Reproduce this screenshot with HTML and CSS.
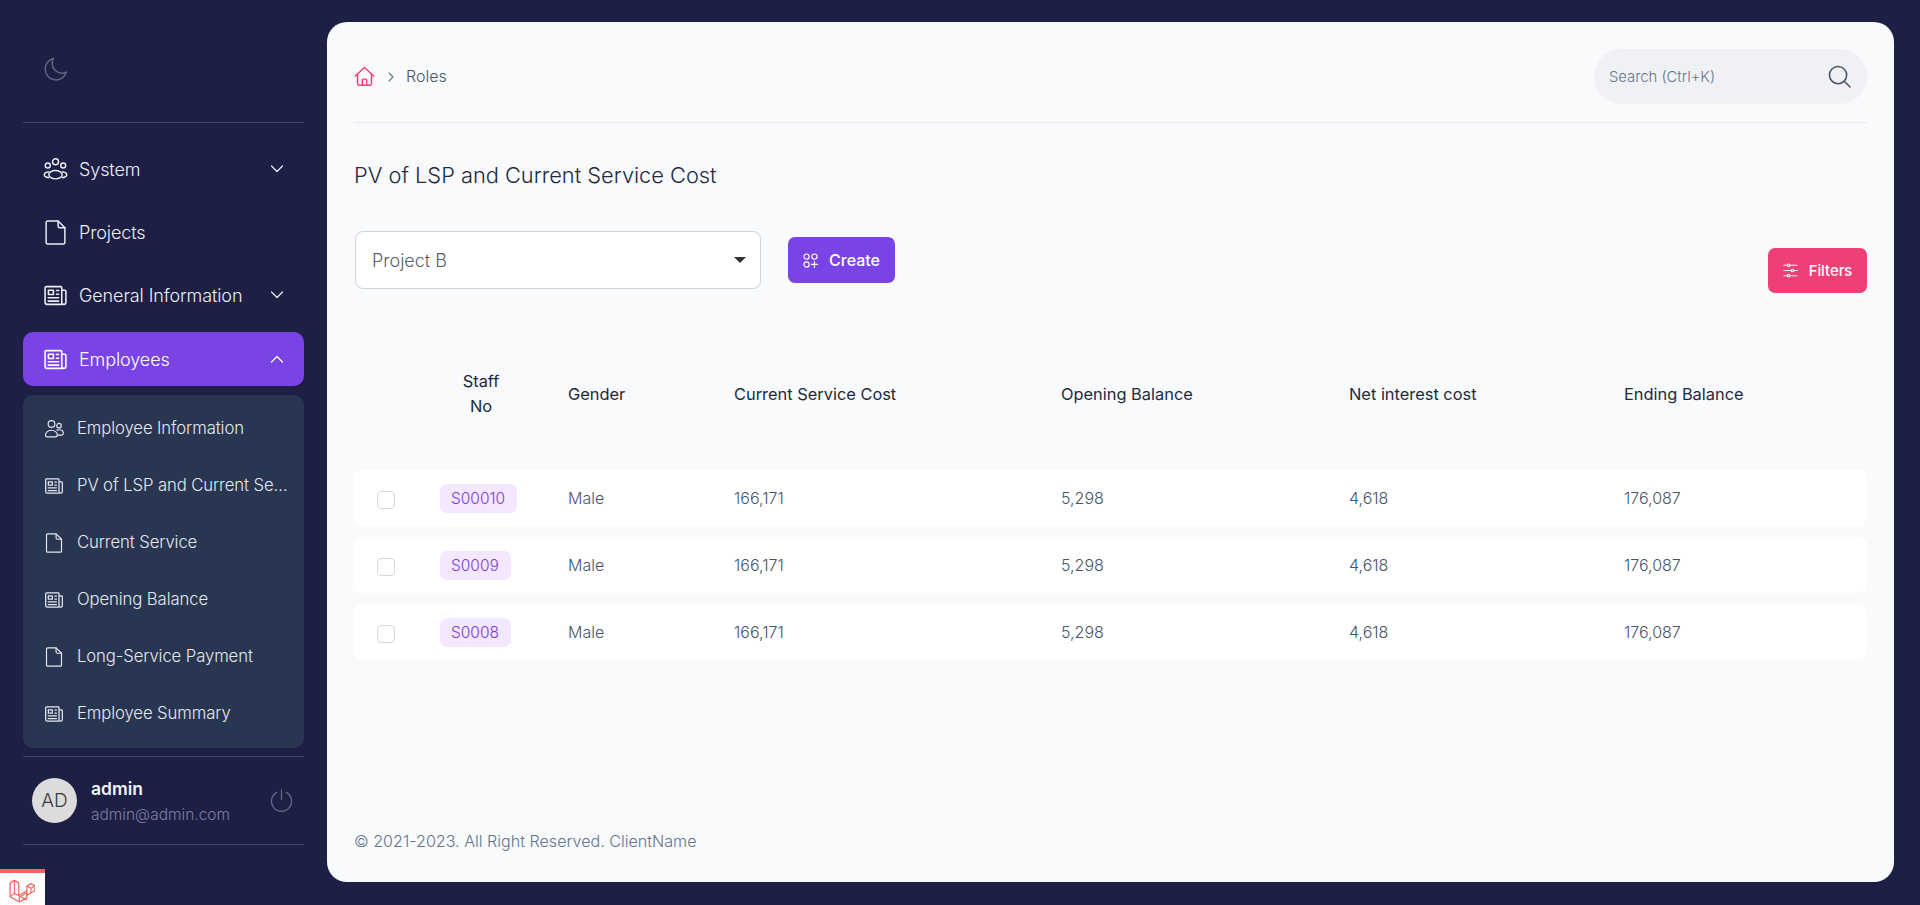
FILE: index.html
```html
<!DOCTYPE html>
<html lang="en">
<head>
    <meta charset="UTF-8">
    <meta name="viewport" content="width=device-width, initial-scale=1.0">
    <title>PV of LSP and Current Service Cost</title>
    <link rel="stylesheet" href="styles.css">
</head>
<body>
    <svg class="icon-defs" width="0" height="0">
        <symbol id="i-news" viewBox="0 0 24 24" fill="none" stroke="currentColor" stroke-width="1.5" stroke-linecap="round" stroke-linejoin="round">
            <path d="M18 20.5H4a2 2 0 0 1-2-2v-14a1 1 0 0 1 1-1h14a1 1 0 0 1 1 1v14a2 2 0 0 0 2 2 2 2 0 0 0 2-2V8a1 1 0 0 0-1-1h-3"/>
            <rect x="5.2" y="7" width="4.8" height="4"/>
            <path d="M13 7.2h2M13 10.8h2M5 14.2h10M5 17.4h10"/>
        </symbol>
        <symbol id="i-doc" viewBox="0 0 24 24" fill="none" stroke="currentColor" stroke-width="1.4" stroke-linecap="round" stroke-linejoin="round">
            <path d="M14.500 1H4.500A1.500 1.500 0 0 0 3 2.500v19A1.500 1.500 0 0 0 4.500 23h15a1.500 1.500 0 0 0 1.500-1.500V7.500z"/>
            <path d="M14.500 1v5a1.500 1.500 0 0 0 1.500 1.500h5"/>
        </symbol>
        <symbol id="i-team" viewBox="0 0 24 24" fill="none" stroke="currentColor" stroke-width="1.4">
            <circle cx="12" cy="4.600" r="2.900"/>
            <circle cx="4.600" cy="8.200" r="2.400"/>
            <circle cx="19.400" cy="8.200" r="2.400"/>
            <ellipse cx="12" cy="17" rx="6.400" ry="4"/>
            <path d="M6 14.200c-2.600.3-4.800 1.400-4.800 2.900s2 2.500 4.600 2.800M18 14.200c2.600.3 4.800 1.400 4.800 2.900s-2 2.500-4.600 2.800"/>
        </symbol>
        <symbol id="i-people" viewBox="0 0 24 24" fill="none" stroke="currentColor" stroke-width="1.4" stroke-linecap="round">
            <circle cx="9" cy="6" r="4"/>
            <circle cx="18" cy="8" r="2.700"/>
            <path d="M3.600 21.500h9.800c1.600 0 2.600-1 2.600-2.300 0-3.200-3.200-5.700-7-5.700s-7.200 2.500-7.200 5.700c0 1.300.9 2.300 1.800 2.300z"/>
            <path d="M15.500 13.300c.8-.3 1.600-.4 2.500-.4 3 0 5.200 1.800 5.200 4.200 0 1.400-.9 2.200-2.200 2.200h-4.800"/>
        </symbol>
        <symbol id="i-down" viewBox="0 0 14 14" fill="none" stroke="currentColor" stroke-width="1.200" stroke-linecap="round" stroke-linejoin="round">
            <path d="M1.500 4l5.500 5.500L12.500 4"/>
        </symbol>
        <symbol id="i-up" viewBox="0 0 14 14" fill="none" stroke="currentColor" stroke-width="1.200" stroke-linecap="round" stroke-linejoin="round">
            <path d="M1.500 10L7 4.500 12.500 10"/>
        </symbol>
    </svg>

    <div class="app">
        <aside class="sidebar">
            <div class="sidebar-top">
                <svg class="moon" viewBox="0 0 24 24" fill="none" stroke="currentColor" stroke-width="1.500" stroke-linejoin="round">
                    <path d="M9.500 1.500A10.700 10.700 0 0 0 1.200 12a10.800 10.800 0 0 0 21.200 3c-1.200.8-2.800 1.200-4.400 1.200A9.800 9.800 0 0 1 8.200 6.400c0-1.800.5-3.500 1.300-4.900z"/>
                </svg>
            </div>

            <nav class="nav">
                <a class="nav-item">
                    <svg class="nav-icon"><use href="#i-team"/></svg>
                    <span class="nav-label">System</span>
                    <svg class="nav-caret"><use href="#i-down"/></svg>
                </a>
                <a class="nav-item">
                    <svg class="nav-icon"><use href="#i-doc"/></svg>
                    <span class="nav-label">Projects</span>
                </a>
                <a class="nav-item">
                    <svg class="nav-icon"><use href="#i-news"/></svg>
                    <span class="nav-label">General Information</span>
                    <svg class="nav-caret"><use href="#i-down"/></svg>
                </a>
                <a class="nav-item active">
                    <svg class="nav-icon"><use href="#i-news"/></svg>
                    <span class="nav-label">Employees</span>
                    <svg class="nav-caret"><use href="#i-up"/></svg>
                </a>
                <div class="subnav">
                    <a class="sub-item"><svg class="sub-icon"><use href="#i-people"/></svg><span class="sub-label">Employee Information</span></a>
                    <a class="sub-item"><svg class="sub-icon"><use href="#i-news"/></svg><span class="sub-label">PV of LSP and Current Service Cost</span></a>
                    <a class="sub-item"><svg class="sub-icon"><use href="#i-doc"/></svg><span class="sub-label">Current Service</span></a>
                    <a class="sub-item"><svg class="sub-icon"><use href="#i-news"/></svg><span class="sub-label">Opening Balance</span></a>
                    <a class="sub-item"><svg class="sub-icon"><use href="#i-doc"/></svg><span class="sub-label">Long-Service Payment</span></a>
                    <a class="sub-item"><svg class="sub-icon"><use href="#i-news"/></svg><span class="sub-label">Employee Summary</span></a>
                </div>
            </nav>

            <div class="user-box">
                <div class="avatar">AD</div>
                <div class="user-info">
                    <div class="user-name">admin</div>
                    <div class="user-mail">admin@admin.com</div>
                </div>
                <svg class="power" viewBox="0 0 24 24" fill="none" stroke="currentColor" stroke-width="1.400" stroke-linecap="round">
                    <path d="M12 1v10"/>
                    <path d="M7 3.500a10.500 10.500 0 1 0 10 0"/>
                </svg>
            </div>
        </aside>

        <main class="card">
            <header class="topbar">
                <div class="breadcrumb">
                    <svg class="home" viewBox="0 0 24 24" fill="none" stroke="currentColor" stroke-width="1.700" stroke-linecap="round" stroke-linejoin="round">
                        <path d="M1.500 11.500L12 1.800l10.500 9.700"/>
                        <path d="M4 9.500V20a2 2 0 0 0 2 2h12a2 2 0 0 0 2-2V9.500"/>
                        <path d="M9.500 22v-6a1 1 0 0 1 1-1h3a1 1 0 0 1 1 1v6"/>
                    </svg>
                    <svg class="crumb-sep" viewBox="0 0 10 10" fill="none" stroke="currentColor" stroke-width="1.100" stroke-linecap="round" stroke-linejoin="round">
                        <path d="M3 1l4 4-4 4"/>
                    </svg>
                    <span class="crumb">Roles</span>
                </div>
                <div class="search">
                    <input class="search-input" type="text" placeholder="Search (Ctrl+K)">
                    <svg class="search-icon" viewBox="0 0 24 24" fill="none" stroke="currentColor" stroke-width="1.600" stroke-linecap="round">
                        <circle cx="10.500" cy="10.500" r="9"/>
                        <path d="M17 17l6 6"/>
                    </svg>
                </div>
            </header>

            <h1 class="page-title">PV of LSP and Current Service Cost</h1>

            <div class="toolbar">
                <div class="toolbar-left">
                    <div class="select-wrap">
                        <select class="select">
                            <option>Project B</option>
                            <option>Project A</option>
                        </select>
                    </div>
                    <button class="btn btn-create" type="button">
                        <svg class="btn-icon" viewBox="0 0 16 16" fill="none" stroke="currentColor" stroke-width="1.200" stroke-linecap="round">
                            <circle cx="3.800" cy="3.800" r="2.800"/>
                            <circle cx="12.200" cy="3.800" r="2.800"/>
                            <circle cx="3.800" cy="12.200" r="2.800"/>
                            <path d="M12.200 9v6.500M9 12.200h6.500"/>
                        </svg>
                        Create
                    </button>
                </div>
                <button class="btn btn-filters" type="button">
                    <svg class="btn-icon" viewBox="0 0 16 16" fill="none" stroke="currentColor" stroke-width="1.100" stroke-linecap="round">
                        <path d="M1 2.500h3.500M7.500 2.500H15M1 8h7.500M11.500 8H15M1 13.500h3.500M7.500 13.500H15"/>
                        <circle cx="6" cy="2.500" r="1.400"/>
                        <circle cx="10" cy="8" r="1.400"/>
                        <circle cx="6" cy="13.500" r="1.400"/>
                    </svg>
                    Filters
                </button>
            </div>

            <table class="data-table">
                <colgroup>
                    <col class="col-check">
                    <col class="col-staff">
                    <col class="col-gender">
                    <col class="col-current">
                    <col class="col-opening">
                    <col class="col-net">
                    <col class="col-ending">
                </colgroup>
                <thead>
                    <tr>
                        <th></th>
                        <th class="th-staff">Staff<br>No</th>
                        <th>Gender</th>
                        <th>Current Service Cost</th>
                        <th>Opening Balance</th>
                        <th>Net interest cost</th>
                        <th>Ending Balance</th>
                    </tr>
                </thead>
                <tbody>
                    <tr>
                        <td class="td-check"><input class="check" type="checkbox"></td>
                        <td><span class="badge">S00010</span></td>
                        <td>Male</td>
                        <td>166,171</td>
                        <td>5,298</td>
                        <td>4,618</td>
                        <td>176,087</td>
                    </tr>
                    <tr>
                        <td class="td-check"><input class="check" type="checkbox"></td>
                        <td><span class="badge">S0009</span></td>
                        <td>Male</td>
                        <td>166,171</td>
                        <td>5,298</td>
                        <td>4,618</td>
                        <td>176,087</td>
                    </tr>
                    <tr>
                        <td class="td-check"><input class="check" type="checkbox"></td>
                        <td><span class="badge">S0008</span></td>
                        <td>Male</td>
                        <td>166,171</td>
                        <td>5,298</td>
                        <td>4,618</td>
                        <td>176,087</td>
                    </tr>
                </tbody>
            </table>

            <footer class="page-footer">© 2021-2023. All Right Reserved. ClientName</footer>
        </main>
    </div>

    <div class="debugbar">
        <svg class="debugbar-logo" viewBox="0 0 24 24" fill="none" stroke="currentColor" stroke-width="1.100" stroke-linejoin="round">
            <path d="M1 4.500L5 2.200l4 2.300v11.600l7.500 4.300"/>
            <path d="M1 4.500v12.700l8.500 4.900 7-4v-4.600"/>
            <path d="M5 2.200v12l4 1.900M5 14.200l-4 3"/>
            <path d="M9.500 22.100v-4.400l7-4M9 16.100l7.500-4.300"/>
            <path d="M16.500 7.300l3.700-2.100 3.700 2.100v4.400l-7.400 4.300V11.600z"/>
            <path d="M16.500 7.300l3.700 2.100 3.700-2.100M20.200 9.400v4.400"/>
        </svg>
    </div>
</body>
</html>
```

FILE: styles.css
```css
* {
    box-sizing: border-box;
}
html, body {
    height: 100%;
}
body {
    margin: 0;
    background-color: #1e1f45;
    font-family: Inter, "Noto Sans", sans-serif;
    color: #334155;
    overflow: hidden;
}
.icon-defs {
    position: absolute;
}
.app {
    display: flex;
    height: 905px;
}

/* sidebar */
.sidebar {
    width: 327px;
    flex-shrink: 0;
    padding: 0 23px;
    display: flex;
    flex-direction: column;
}
.sidebar-top {
    height: 123px;
    padding: 57px 0 0 21px;
    border-bottom: 1px solid #3c4869;
}
.moon {
    display: block;
    width: 24px;
    height: 24px;
    color: #62657f;
}
.nav {
    padding-top: 19px;
}
.nav-item {
    height: 54px;
    margin-bottom: 9px;
    padding: 0 21px 0 20px;
    display: flex;
    align-items: center;
    border-radius: 10px;
    color: #eceef6;
}
.nav-item.active {
    margin-top: 10px;
    background-color: #7a43e6;
    color: #fff;
}
.nav-icon {
    width: 25px;
    height: 25px;
    flex-shrink: 0;
    margin-right: 11px;
}
.nav-label {
    flex: 1;
    font-size: 18px;
    font-weight: 300;
    letter-spacing: -0.1px;
}
.nav-caret {
    width: 14px;
    height: 14px;
    margin-right: -1px;
}
.subnav {
    height: 353px;
    padding: 5px 0;
    border-radius: 10px;
    background-color: #293651;
}
.sub-item {
    height: 57px;
    padding: 0 12px 0 21px;
    display: flex;
    align-items: center;
    color: #e4e7f0;
}
.sub-icon {
    width: 20px;
    height: 20px;
    flex-shrink: 0;
    margin-right: 13px;
}
.sub-label {
    padding-bottom: 2px;
    font-size: 16.700px;
    font-weight: 300;
    letter-spacing: -0.1px;
    white-space: nowrap;
    overflow: hidden;
    text-overflow: ellipsis;
}
.user-box {
    margin-top: 8px;
    height: 89px;
    padding: 0 11px 0 9px;
    display: flex;
    align-items: center;
    border-top: 1px solid #3c4869;
    border-bottom: 1px solid #3c4869;
}
.avatar {
    width: 45px;
    height: 45px;
    flex-shrink: 0;
    margin-right: 14px;
    border-radius: 50%;
    background-color: #dcdcdc;
    color: #3a3a3a;
    font-size: 19px;
    font-weight: 300;
    display: flex;
    align-items: center;
    justify-content: center;
}
.user-info {
    flex: 1;
}
.user-name {
    font-size: 17.500px;
    font-weight: 600;
    color: #f4f5fa;
    margin-bottom: 6px;
}
.user-mail {
    font-size: 15.500px;
    font-weight: 300;
    color: #7a80a0;
}
.power {
    width: 23px;
    height: 23px;
    color: #62657f;
}

/* main card */
.card {
    flex: 1;
    margin: 22px 26px 23px 0;
    padding: 0 27px 31px;
    display: flex;
    flex-direction: column;
    border-radius: 20px;
    background-color: #f9fafc;
}
.topbar {
    padding: 27px 0 18px;
    display: flex;
    align-items: center;
    justify-content: space-between;
    border-bottom: 1px solid #e6e8ec;
}
.breadcrumb {
    display: flex;
    align-items: center;
}
.home {
    width: 21px;
    height: 21px;
    color: #ee4077;
}
.crumb-sep {
    width: 10px;
    height: 10px;
    margin: 0 10px 0 11px;
    color: #64748b;
}
.crumb {
    margin-bottom: 2px;
    font-size: 16px;
    font-weight: 300;
    color: #475569;
}
.search {
    width: 273px;
    height: 55px;
    padding: 0 16px 0 15px;
    display: flex;
    align-items: center;
    border-radius: 28px;
    background-color: #f0f1f5;
}
.search-input {
    flex: 1;
    min-width: 0;
    border: none;
    background: none;
    outline: none;
    padding: 0;
    font-family: inherit;
    font-size: 14.800px;
    font-weight: 300;
}
.search-input::placeholder {
    color: #64748b;
    opacity: 1;
}
.search-icon {
    width: 23px;
    height: 23px;
    color: #475569;
}
.page-title {
    margin: 37px 0 41px;
    font-size: 21.800px;
    line-height: 30px;
    font-weight: 300;
    color: #1e293b;
}
.toolbar {
    display: flex;
    align-items: flex-start;
    justify-content: space-between;
}
.toolbar-left {
    padding-left: 1px;
    display: flex;
    align-items: center;
    gap: 27px;
}
.select-wrap {
    position: relative;
    width: 406px;
}
.select-wrap::after {
    content: "";
    position: absolute;
    right: 15px;
    top: 26px;
    border-left: 6px solid transparent;
    border-right: 6px solid transparent;
    border-top: 6px solid #333;
}
.select {
    width: 100%;
    height: 58px;
    padding: 0 16px;
    border: 1px solid #cfd3da;
    border-radius: 8px;
    background-color: #fff;
    appearance: none;
    font-family: inherit;
    font-size: 18px;
    font-weight: 300;
    color: #5b606b;
}
.btn {
    border: none;
    border-radius: 7px;
    color: #fff;
    font-family: inherit;
    font-weight: 500;
    display: flex;
    align-items: center;
    justify-content: center;
    gap: 11px;
}
.btn-icon {
    width: 15px;
    height: 15px;
}
.btn-create {
    width: 107px;
    height: 46px;
    font-size: 16px;
    background-color: #7a43e6;
}
.btn-filters {
    width: 99px;
    height: 45px;
    margin-top: 17px;
    font-size: 14.800px;
    background-color: #ee4077;
}

/* table */
.data-table {
    width: 1513px;
    margin-top: 45px;
    table-layout: fixed;
    border-collapse: separate;
    border-spacing: 0 11px;
}
.col-check { width: 72px; }
.col-staff { width: 128px; }
.col-gender { width: 166px; }
.col-current { width: 327px; }
.col-opening { width: 288px; }
.col-net { width: 275px; }
.col-ending { width: 257px; }
.data-table th {
    padding: 20px 14px 40px;
    font-size: 16.400px;
    line-height: 25px;
    font-weight: 400;
    text-align: left;
    color: #1e293b;
}
.data-table th.th-staff {
    padding-right: 32px;
    text-align: center;
}
.data-table td {
    height: 56px;
    padding: 0 14px;
    background-color: #fff;
    font-size: 16px;
    font-weight: 300;
    color: #475569;
}
.data-table td:first-child {
    border-radius: 8px 0 0 8px;
}
.data-table td:last-child {
    border-radius: 0 8px 8px 0;
}
.data-table td.td-check {
    padding: 3px 0 0 23px;
}
.check {
    display: block;
    width: 18px;
    height: 18px;
    margin: 0;
    appearance: none;
    border: 1px solid #d4d7dd;
    border-radius: 4px;
    background-color: #fff;
}
.badge {
    display: inline-block;
    height: 29px;
    padding: 0 12px 0 11px;
    border-radius: 7px;
    background-color: #f3e8ff;
    color: #7e3bd0;
    font-size: 15.500px;
    line-height: 29px;
}
.page-footer {
    margin-top: auto;
    font-size: 16.100px;
    font-weight: 300;
    line-height: 20px;
    color: #64748b;
}

/* debug bar tab at the bottom corner */
.debugbar {
    position: fixed;
    left: 0;
    bottom: 0;
    width: 45px;
    height: 36px;
    border-top: 4px solid #f4645f;
    background-color: #fff;
    padding: 5px 0 0 9px;
}
.debugbar-logo {
    display: block;
    width: 26px;
    height: 26px;
    color: #f4645f;
}
```
